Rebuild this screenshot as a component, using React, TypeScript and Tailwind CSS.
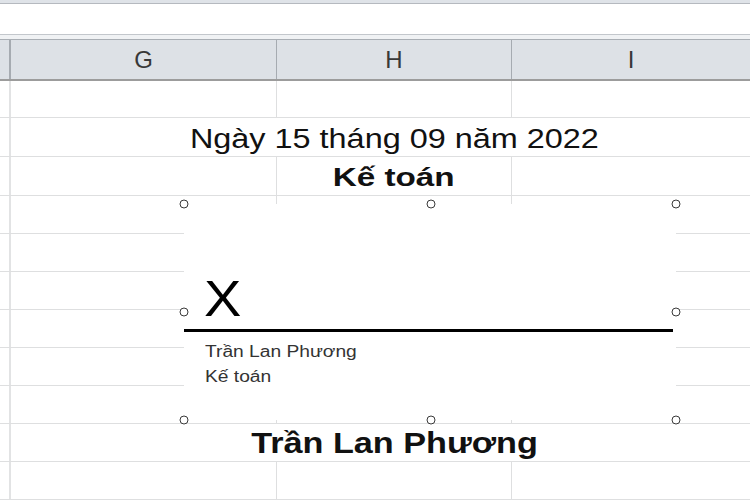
import React from 'react'

const font = { fontFamily: '"Liberation Sans", Arial, sans-serif' }

// spreadsheet rows below the column header, heights in px
const rows = [37, 39, 39, 38, 38, 38, 38, 38, 38, 38, 38]

function Handle({ x, y }: { x: number; y: number }) {
  return (
    <div
      className="absolute w-[9px] h-[9px] -translate-x-1/2 -translate-y-1/2 rounded-full border-[1.5px] border-[#3a3a3a] bg-white"
      style={{ left: x, top: y }}
    />
  )
}

function Row({ h, hideCols, children }: { h: number; hideCols?: boolean; children?: React.ReactNode }) {
  return (
    <div className="flex border-b border-[#dedfe0]" style={{ height: h }}>
      <div className="w-[11px] shrink-0 border-r-2 border-[#e2e3e4]" />
      <div className={`w-[266px] shrink-0 ${hideCols ? '' : 'border-r border-[#dedfe0]'}`} />
      <div className={`w-[235px] shrink-0 flex justify-center items-end ${hideCols ? '' : 'border-r border-[#dedfe0]'}`}>
        {children}
      </div>
      <div className="flex-1" />
    </div>
  )
}

export default function App() {
  return (
    <div className="w-[750px] h-[500px] overflow-hidden bg-white" style={font}>
      {/* ribbon edge + formula bar */}
      <div className="h-[4px] bg-[#dfe3e8] border-b border-[#b5b9bf]" />
      <div className="h-[31px] bg-white border-b border-[#c3c7cc]" />
      <div className="h-[5px] bg-[#f0f2f4] border-b border-[#a9aeb4]" />

      {/* column header */}
      <div className="flex h-[41px] bg-[#dde1e6] border-b-2 border-[#9c9c9c] text-[#383838] text-[24px]">
        <div className="w-[11px] shrink-0 border-r-2 border-[#a6abb1]" />
        <div className="w-[266px] shrink-0 border-r border-[#a6abb1] flex items-center justify-center">G</div>
        <div className="w-[235px] shrink-0 border-r border-[#a6abb1] flex items-center justify-center">H</div>
        <div className="flex-1 flex items-center justify-center">I</div>
      </div>

      {/* cells */}
      <div className="relative">
        {rows.map((h, i) => {
          if (i === 1)
            return (
              <Row key={i} h={h} hideCols>
                <span className="inline-block whitespace-nowrap text-[27px] leading-[27px] pb-[3px] scale-x-[1.2] text-[#111]">
                  Ngày 15 tháng 09 năm 2022
                </span>
              </Row>
            )
          if (i === 2)
            return (
              <Row key={i} h={h}>
                <span className="inline-block whitespace-nowrap font-bold text-[26px] leading-[26px] pb-[5px] scale-x-[1.28] text-[#111]">
                  Kế toán
                </span>
              </Row>
            )
          if (i === 9)
            return (
              <Row key={i} h={h} hideCols>
                <span className="inline-block whitespace-nowrap font-bold text-[29px] leading-[29px] pb-[3px] scale-x-[1.18] text-[#111]">
                  Trần Lan Phương
                </span>
              </Row>
            )
          return <Row key={i} h={h} />
        })}

        {/* signature line object */}
        <div className="absolute left-[184px] top-[123px] w-[492px] h-[216px] bg-white">
          <div className="pt-[70px] pl-[20px] text-[50px] leading-[50px] text-black">
            <span className="inline-block origin-left scale-x-[1.12]">X</span>
          </div>
          <div className="mt-[5px] h-[3px] w-[489px] bg-black" />
          <div className="mt-[7px] pl-[21px] text-[16px] leading-[25px] text-[#333]">
            <div className="origin-left scale-x-[1.2] whitespace-nowrap">Trần Lan Phương</div>
            <div className="origin-left scale-x-[1.2] whitespace-nowrap">Kế toán</div>
          </div>
        </div>
        <Handle x={184} y={123} />
        <Handle x={431} y={123} />
        <Handle x={676} y={123} />
        <Handle x={184} y={231} />
        <Handle x={676} y={231} />
        <Handle x={184} y={339} />
        <Handle x={431} y={339} />
        <Handle x={676} y={339} />
      </div>
    </div>
  )
}
